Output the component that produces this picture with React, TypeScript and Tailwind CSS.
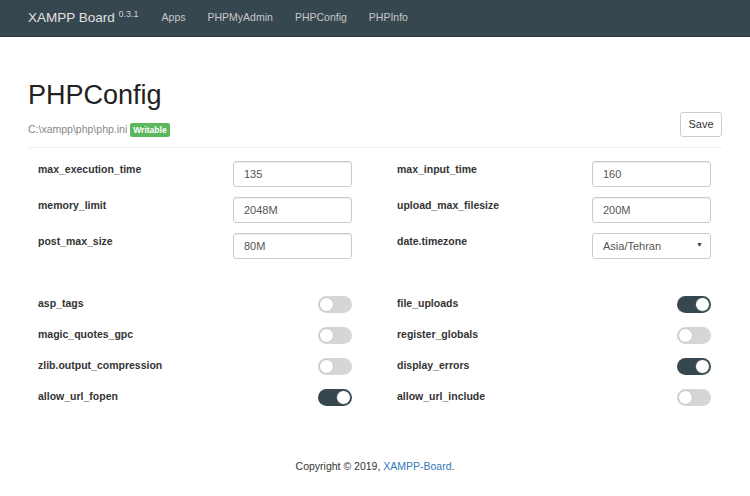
import React, { useState } from 'react';

const FIELDS_LEFT = [
  { name: 'max_execution_time', value: '135' },
  { name: 'memory_limit', value: '2048M' },
  { name: 'post_max_size', value: '80M' },
];

const FIELDS_RIGHT = [
  { name: 'max_input_time', value: '160' },
  { name: 'upload_max_filesize', value: '200M' },
];

const TOGGLES_LEFT = [
  { name: 'asp_tags', on: false },
  { name: 'magic_quotes_gpc', on: false },
  { name: 'zlib.output_compression', on: false },
  { name: 'allow_url_fopen', on: true },
];

const TOGGLES_RIGHT = [
  { name: 'file_uploads', on: true },
  { name: 'register_globals', on: false },
  { name: 'display_errors', on: true },
  { name: 'allow_url_include', on: false },
];

function Toggle({ initial }: { initial: boolean }) {
  const [on, setOn] = useState(initial);
  return (
    <button
      type="button"
      onClick={() => setOn(!on)}
      className={`relative w-[34px] h-[17px] rounded-full transition-colors ${on ? 'bg-[#37474f]' : 'bg-[#d6d6d6]'}`}
    >
      <span
        className={`absolute top-[1px] w-[15px] h-[15px] rounded-full bg-white border ${
          on ? 'left-[18px] border-[#37474f]' : 'left-[1px] border-[#c4c4c4]'
        }`}
      />
    </button>
  );
}

function FieldRow({ name, value }: { name: string; value: string }) {
  return (
    <div className="flex items-start justify-between h-[36px]">
      <label className="pt-[1px] text-[10.5px] font-bold text-[#333]">{name}</label>
      <input
        type="text"
        defaultValue={value}
        className="w-[119px] h-[26px] px-[10px] border border-[#ccc] rounded-[3px] text-[11px] text-[#555] shadow-[inset_0_1px_1px_rgba(0,0,0,0.075)] outline-none"
      />
    </div>
  );
}

function ToggleRow({ name, on }: { name: string; on: boolean }) {
  return (
    <div className="flex items-center justify-between h-[31px]">
      <span className="text-[10.5px] font-bold text-[#333]">{name}</span>
      <Toggle initial={on} />
    </div>
  );
}

export default function App() {
  return (
    <div className="min-h-[496px] bg-white text-[#333]" style={{ fontFamily: '"Liberation Sans", Arial, sans-serif' }}>
      <nav className="h-[37px] bg-[#37474f] border-b border-[#2a363c] flex items-center px-[28px]">
        <span className="text-[13.5px] text-[#e0e0e0] mr-[23px]">
          XAMPP Board <sup className="text-[9px] text-[#cfcfcf]">0.3.1</sup>
        </span>
        <div className="flex gap-[22px] text-[10.5px] text-[#c8c8c8]">
          <a>Apps</a>
          <a>PHPMyAdmin</a>
          <a>PHPConfig</a>
          <a>PHPInfo</a>
        </div>
      </nav>

      <main className="px-[28px] pt-[41px]">
        <div className="flex items-end justify-between pb-[9px] border-b border-[#eee]">
          <div>
            <h1 className="text-[27px] leading-[34px] text-[#222]">PHPConfig</h1>
            <div className="mt-[10px] flex items-center gap-[3px] text-[10.5px] text-[#888]">
              C:\xampp\php\php.ini
              <span className="px-[3px] py-[1px] rounded-[2px] bg-[#5cb85c] text-white text-[8.5px] font-bold">Writable</span>
            </div>
          </div>
          <button className="w-[42px] h-[25px] mb-[1px] border border-[#ccc] rounded-[3px] text-[11px] text-[#333] bg-white">
            Save
          </button>
        </div>

        <div className="grid grid-cols-2 gap-x-[45px] pl-[10px] pr-[11px] pt-[13px]">
          <div>
            {FIELDS_LEFT.map(f => (
              <FieldRow key={f.name} {...f} />
            ))}
          </div>
          <div>
            {FIELDS_RIGHT.map(f => (
              <FieldRow key={f.name} {...f} />
            ))}
            <div className="flex items-start justify-between h-[36px]">
              <label className="pt-[1px] text-[10.5px] font-bold text-[#333]">date.timezone</label>
              <div className="relative w-[119px] h-[26px] border border-[#ccc] rounded-[3px] flex items-center px-[10px] text-[11px] text-[#555]">
                Asia/Tehran
                <span className="absolute right-[7px] top-[6px] text-[7px] text-[#444]">▼</span>
              </div>
            </div>
          </div>
        </div>

        <div className="grid grid-cols-2 gap-x-[45px] pl-[10px] pr-[11px] pt-[20px]">
          <div>
            {TOGGLES_LEFT.map(t => (
              <ToggleRow key={t.name} {...t} />
            ))}
          </div>
          <div>
            {TOGGLES_RIGHT.map(t => (
              <ToggleRow key={t.name} {...t} />
            ))}
          </div>
        </div>
      </main>

      <footer className="pt-[46px] text-center text-[10.5px] text-[#333]">
        Copyright © 2019, <a className="text-[#337ab7]">XAMPP-Board</a>.
      </footer>
    </div>
  );
}
